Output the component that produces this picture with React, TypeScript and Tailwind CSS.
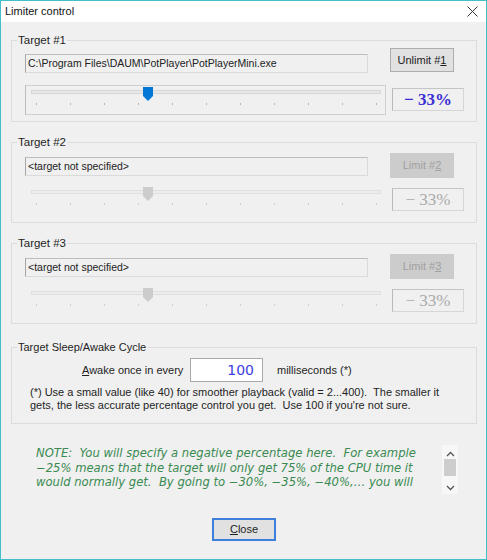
import React from 'react';

const TICKS = Array.from({ length: 11 }, (_, i) => 10 + i * 34);

function Slider({ enabled }: { enabled: boolean }) {
  return (
    <div
      className={`w-[361px] h-[30px] border ${
        enabled ? 'border-[#cfcfcf] border-l-[#bdbdbd]' : 'border-transparent'
      }`}
    >
      <svg width="359" height="28" viewBox="0 0 359 28" className="block">
        <rect
          x="5.5"
          y="4.5"
          width="349"
          height="3"
          fill={enabled ? '#e7e7e7' : '#ececec'}
          stroke={enabled ? '#d6d6d6' : '#e0e0e0'}
        />
        {TICKS.map((x) => (
          <rect key={x} x={x} y="17" width="1" height="2" fill={enabled ? '#b4b4b4' : '#cfcfcf'} />
        ))}
        <path d="M117 1 h10 v9 l-5 5 l-5 -5 z" fill={enabled ? '#0078d7' : '#cccccc'} />
      </svg>
    </div>
  );
}

function TargetGroup({
  n,
  path,
  enabled,
}: {
  n: number;
  path: string;
  enabled: boolean;
}) {
  return (
    <fieldset className="border border-[#dcdcdc] w-[466px]">
      <legend className="ml-[5px] px-[1px] leading-[14px] text-[11.5px]">Target #{n}</legend>
      <div className={`pl-[13px] ${enabled ? 'pb-[6px]' : 'pb-[7px]'}`}>
        <div className={`flex items-start ${enabled ? 'mt-[1px]' : 'mt-[4px]'}`}>
          <div
            className={`w-[343px] h-[19px] ${enabled ? 'mt-[6px]' : 'mt-[4px]'} bg-[#f0f0f0] border border-[#dadada] border-l-[#a6a6a6] border-t-[#bdbdbd] pl-[2px] flex items-center text-[#222] text-[10.5px] whitespace-pre`}
          >
            {path}
          </div>
          <button
            className={`ml-[22px] w-[64px] ${enabled ? 'h-[24px]' : 'h-[25px]'} border flex items-center justify-center ${
              enabled
                ? 'bg-[#e1e1e1] border-[#adadad] text-[#1e1e1e]'
                : 'bg-[#cccccc] border-[#cccccc] text-[#a0a0a0]'
            }`}
          >
            {enabled ? 'Unlimit' : 'Limit'} #<span className="underline">{n}</span>
          </button>
        </div>
        <div className={`flex items-start ${enabled ? 'mt-[12px]' : 'mt-[7px]'}`}>
          <Slider enabled={enabled} />
          <div className="ml-[6px] mt-[3px] w-[72px] h-[23px] border border-[#d6d6d6] border-l-[#b9b9b9] border-t-[#c4c4c4] flex items-center justify-center font-['Liberation_Serif','Times_New_Roman',serif] text-[17px]">
            {enabled ? (
              <span className="font-bold text-[#3b2fd4]">− 33%</span>
            ) : (
              <span className="text-[#ababab]">− 33%</span>
            )}
          </div>
        </div>
      </div>
    </fieldset>
  );
}

export default function App() {
  return (
    <div className="w-[487px] h-[560px] border border-[#41bfcb] bg-[#f0f0f0] flex flex-col font-['Liberation_Sans',Arial,sans-serif] text-[11px] text-[#1e1e1e]">
      <div className="h-[21px] bg-white flex items-center justify-between pl-[4px] pr-[8px] shrink-0">
        <span className="text-[11px] text-[#111]">Limiter control</span>
        <svg width="11" height="11" viewBox="0 0 11 11">
          <path d="M0.5 0.5 L10.5 10.5 M10.5 0.5 L0.5 10.5" stroke="#333" strokeWidth="1" />
        </svg>
      </div>

      <div className="pl-[10px] pt-[11px]">
        <TargetGroup n={1} path="C:\Program Files\DAUM\PotPlayer\PotPlayerMini.exe" enabled />
        <div className="mt-[13px]">
          <TargetGroup n={2} path="<target not specified>" enabled={false} />
        </div>
        <div className="mt-[13px]">
          <TargetGroup n={3} path="<target not specified>" enabled={false} />
        </div>

        <fieldset className="mt-[16px] border border-[#dcdcdc] w-[466px]">
          <legend className="ml-[5px] px-[1px] leading-[14px] text-[11px]">Target Sleep/Awake Cycle</legend>
          <div className="pb-[11px]">
            <div className="mt-[4px] flex items-center pl-[70px]">
              <span className="w-[108px] whitespace-nowrap text-[11px]">
                <span className="underline">A</span>wake once in every
              </span>
              <div className="w-[73px] h-[24px] bg-white border border-[#a9a9a9] flex items-center justify-end pr-[8px] font-['DejaVu_Sans',Verdana,sans-serif] text-[14px] text-[#3d3de0]">
                100
              </div>
              <span className="ml-[14px] whitespace-nowrap text-[11px]">milliseconds (*)</span>
            </div>
            <div className="mt-[4px] pl-[18px] leading-[13px] whitespace-pre text-[11px]">
              <div>{'(*) Use a small value (like 40) for smoother playback (valid = 2...400).  The smaller it'}</div>
              <div>{"gets, the less accurate percentage control you get.  Use 100 if you're not sure."}</div>
            </div>
          </div>
        </fieldset>

        <div className="mt-[21px] flex">
          <div className="ml-[25px] w-[405px] h-[49px] overflow-hidden font-['DejaVu_Sans',Verdana,sans-serif] italic text-[11.6px] leading-[14.5px] text-[#3a8a52] whitespace-pre pt-[1px]">
            <div>{'NOTE:  You will specify a negative percentage here.  For example'}</div>
            <div>{'\u221225% means that the target will only get 75% of the CPU time it'}</div>
            <div>{'would normally get.  By going to \u221230%, \u221235%, \u221240%,\u2026 you will'}</div>
          </div>
          <div className="ml-[1px] w-[16px] h-[49px] bg-[#f7f7f7] flex flex-col items-center">
            <svg width="9" height="6" viewBox="0 0 9 6" className="mt-[6px]">
              <path d="M1 5 L4.5 1.5 L8 5" fill="none" stroke="#555" strokeWidth="1.3" />
            </svg>
            <div className="mt-[2px] w-[12px] h-[17px] bg-[#cdcdcd]" />
            <svg width="9" height="6" viewBox="0 0 9 6" className="mt-[9px]">
              <path d="M1 1 L4.5 4.5 L8 1" fill="none" stroke="#555" strokeWidth="1.3" />
            </svg>
          </div>
        </div>

        <div className="mt-[24px] w-[466px] flex justify-center">
          <button className="w-[64px] h-[23px] bg-[#e1e1e1] border-2 border-[#3f7fdc] text-[11px] flex items-center justify-center">
            <span className="underline">C</span>lose
          </button>
        </div>
      </div>
    </div>
  );
}
